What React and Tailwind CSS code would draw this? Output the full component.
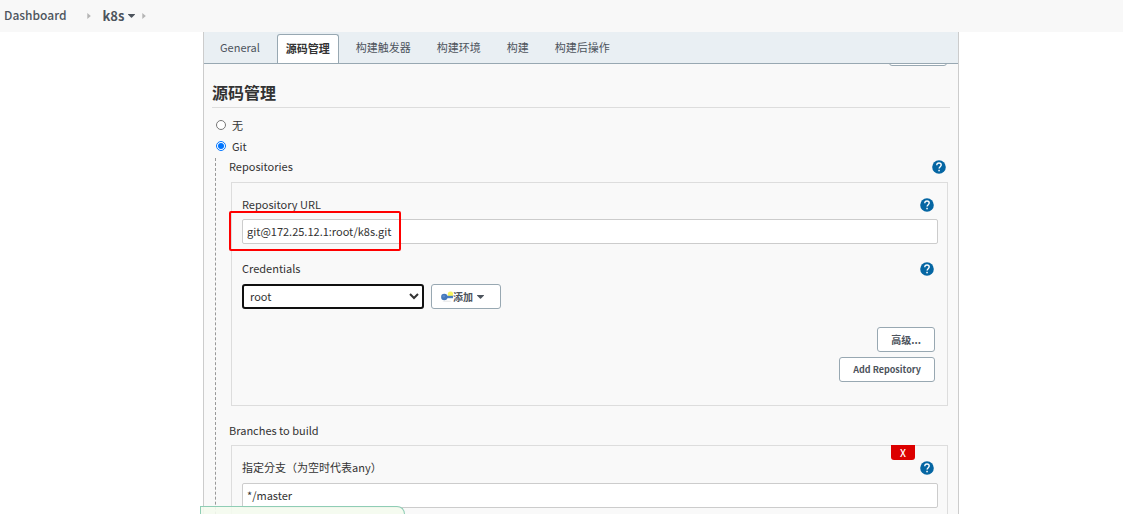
import { useState } from "react";

const tabs = ["General", "源码管理", "构建触发器", "构建环境", "构建", "构建后操作"];

function Caret() {
    return (
        <svg width="7" height="4" viewBox="0 0 7 4" fill="currentColor" aria-hidden="true">
            <path d="M0 0h7v.5L4 3.500a.7.7 0 0 1-1 0L0 .5z" />
        </svg>
    );
}

function Separator() {
    return (
        <svg width="4" height="6" viewBox="0 0 4 6" fill="#b4b4b4" aria-hidden="true">
            <path d="M0.3 0L3.8 3L0.3 6z" />
        </svg>
    );
}

function HelpButton({ label }) {
    return (
        <button type="button" aria-label={`Help for ${label}`} className="size-[14px] shrink-0">
            <svg width="14" height="14" viewBox="0 0 14 14" aria-hidden="true">
                <circle cx="7" cy="7" r="6.8" fill="#0566a3" />
                <path
                    d="M4.8 5.3C4.8 3.9 5.7 3 7 3s2.2.9 2.2 2.1c0 1.6-2.1 1.7-2.1 3.5"
                    fill="none"
                    stroke="#fff"
                    strokeWidth="1.4"
                />
                <rect x="6.3" y="9.8" width="1.5" height="1.5" fill="#fff" />
            </svg>
        </button>
    );
}

function KeyIcon() {
    return (
        <svg width="12" height="12" viewBox="0 0 12 12" aria-hidden="true">
            <ellipse cx="6" cy="10.2" rx="4.5" ry="0.8" fill="#ececec" />
            <circle cx="9.5" cy="3.2" r="2.7" fill="#f8f560" />
            <path d="M4 4.8h8v2.4H4z" fill="#4a7fc0" />
            <circle cx="3.3" cy="6" r="3.2" fill="#4478bb" />
            <circle cx="2.8" cy="5.2" r="1.2" fill="#5f8cc8" />
        </svg>
    );
}

function FieldLabel({ htmlFor, className = "", children, ...props }) {
    return (
        <div className={`flex h-[18px] items-center justify-between pr-1 ${className}`} {...props}>
            <label htmlFor={htmlFor} className="pb-[2px]">{children}</label>
            <HelpButton label={children} />
        </div>
    );
}

function OutlineButton({ className = "", children, ...props }) {
    return (
        <button
            type="button"
            className={`flex h-[25px] items-center rounded-[3px] border border-[#98a8b2] bg-white font-bold text-[#4d545d] ${className}`}
            {...props}
        >
            {children}
        </button>
    );
}

export default function App() {
    const [activeTab, setActiveTab] = useState("源码管理");
    const [scm, setScm] = useState("git");
    const [url, setUrl] = useState("git@172.25.12.1:root/k8s.git");
    const [branch, setBranch] = useState("*/master");

    const inputClass =
        "h-[25px] w-full rounded-[2px] border border-[#ccc] bg-white px-1 pb-[2px] text-[11px] text-[#333] outline-none";

    return (
        <div className="relative flex h-screen flex-col overflow-hidden bg-white font-['Noto_Sans_CJK_SC',sans-serif] text-[11px] leading-4 text-[#333]">
            <nav className="flex h-8 shrink-0 items-center bg-[#f8f8f8] pl-1 font-medium text-[#4d545d]">
                <a href="#dashboard" className="mr-5 pb-[3px] text-[12px]">Dashboard</a>
                <Separator />
                <a href="#k8s" className="mr-[7px] ml-3 flex items-center gap-1 text-[13px] font-bold">
                    k8s
                    <Caret />
                </a>
                <Separator />
            </nav>

            <div className="flex min-h-0 grow pr-[164px] pl-[203px]">
                <main className="min-w-0 grow border-x border-[#ccc] bg-[#f9f9f9]">
                    <div className="flex h-8 items-end gap-2 border-b border-[#98a8b2] bg-[#e9eff3] pl-[7px]">
                        {tabs.map((tab) => (
                            <button
                                key={tab}
                                type="button"
                                onClick={() => setActiveTab(tab)}
                                className={
                                    activeTab === tab
                                        ? "h-[29px] rounded-t-[3px] border border-b-0 border-[#98a8b2] bg-white px-2 pb-[3px] font-bold text-[#333]"
                                        : "h-[29px] px-[9px] pb-[3px] text-[#4d545d]"
                                }
                            >
                                {tab}
                            </button>
                        ))}
                    </div>

                    <form className="px-2">
                        <div className="flex h-[2px] items-end justify-end overflow-hidden pr-[3px]">
                            <OutlineButton aria-label="高级" className="w-[58px] shrink-0" />
                        </div>

                        <h2 className="mt-[14px] border-b border-[#ddd] pb-[3px] text-[16px] leading-6 font-bold">源码管理</h2>

                        <div className="mt-[6px] pb-[2px]">
                            <label className="flex h-[21px] items-center gap-[6px] pl-1">
                                <input
                                    type="radio"
                                    name="scm"
                                    className="size-[10px]"
                                    checked={scm === "none"}
                                    onChange={() => setScm("none")}
                                />
                                无
                            </label>
                            <label className="flex h-[21px] items-center gap-[6px] pl-1">
                                <input
                                    type="radio"
                                    name="scm"
                                    className="size-[10px]"
                                    checked={scm === "git"}
                                    onChange={() => setScm("git")}
                                />
                                Git
                            </label>
                        </div>

                        <div className="ml-[3px] border-l border-dashed border-[#999] pb-20 pl-[13px]">
                            <FieldLabel>Repositories</FieldLabel>
                            <section className="mx-[2px] mt-[6px] border border-[#ddd] pt-[13px] pr-[9px] pb-[23px] pl-[10px]">
                                <FieldLabel htmlFor="repo-url">Repository URL</FieldLabel>
                                <div className="relative mt-[5px]">
                                    <input
                                        id="repo-url"
                                        className={inputClass}
                                        value={url}
                                        onChange={(e) => setUrl(e.target.value)}
                                    />
                                    <div className="pointer-events-none absolute -top-2 -left-[13px] h-10 w-[172px] rounded-[2px] border-2 border-[#f00]" />
                                </div>

                                <FieldLabel htmlFor="credentials" className="mt-4">Credentials</FieldLabel>
                                <div className="mt-[6px] flex items-center gap-[7px]">
                                    <select
                                        id="credentials"
                                        className="h-[25px] w-[182px] rounded-[3px] border-2 border-[#101010] bg-white pb-[2px] pl-[2px] text-[11px] text-[#333]"
                                    >
                                        <option>root</option>
                                    </select>
                                    <OutlineButton className="pr-4 pl-[9px] text-[10px]">
                                        <KeyIcon />
                                        <span className="mr-1">添加</span>
                                        <Caret />
                                    </OutlineButton>
                                </div>

                                <div className="mt-[18px] flex flex-col items-end gap-[5px] pr-[3px]">
                                    <OutlineButton className="px-[13px] text-[10px]">高级...</OutlineButton>
                                    <OutlineButton className="px-[13px] text-[9px]">Add Repository</OutlineButton>
                                </div>
                            </section>

                            <div className="mt-4 flex h-[18px] items-center pb-[2px]">Branches to build</div>
                            <section className="relative mx-[2px] mt-[5px] border border-[#ddd] pt-[13px] pr-[9px] pb-20 pl-[10px]">
                                <button
                                    type="button"
                                    aria-label="Delete branch"
                                    className="absolute -top-px right-8 h-[15px] w-6 rounded-b-[3px] bg-[#dc0000] text-[10px] leading-3 font-medium text-white"
                                >
                                    X
                                </button>
                                <FieldLabel
                                    htmlFor="branch"
                                    lang="zh-TW"
                                    className="font-['Noto_Sans_CJK_TC',sans-serif] [text-spacing-trim:space-all]"
                                >
                                    指定分支（为空时代表any）
                                </FieldLabel>
                                <div className="mt-[6px]">
                                    <input
                                        id="branch"
                                        className={inputClass}
                                        value={branch}
                                        onChange={(e) => setBranch(e.target.value)}
                                    />
                                </div>
                            </section>
                        </div>
                    </form>
                </main>
            </div>

            {/* save bar peeking in from the bottom edge */}
            <div className="absolute bottom-0 left-[200px] h-2 w-[205px] rounded-tr-lg border border-b-0 border-[#8fcdb5] bg-[#f4fbee]/90" />
        </div>
    );
}
